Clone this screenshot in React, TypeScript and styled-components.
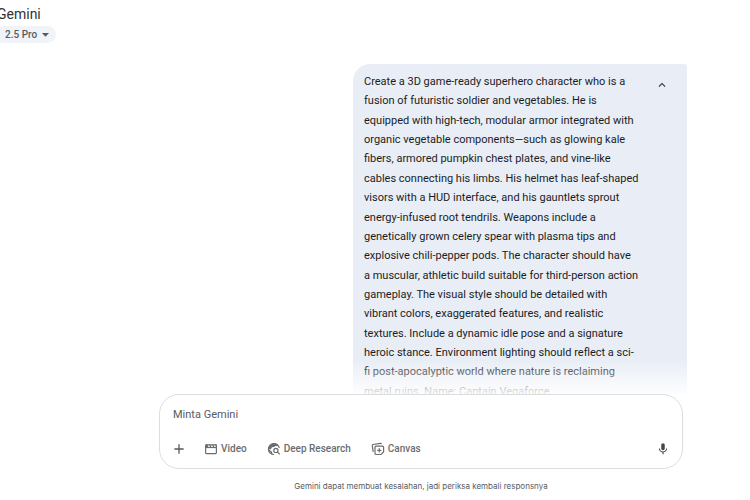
import React from "react";
import styled, { createGlobalStyle } from "styled-components";
import { MdAdd, MdArrowDropDown, MdKeyboardArrowUp, MdMic } from "react-icons/md";

const GlobalStyle = createGlobalStyle`
  *, *::before, *::after { box-sizing: border-box; }
  body {
    margin: 0;
    background: #fff;
    color: #1b1c1d;
    font-family: Roboto, Inter, sans-serif;
  }
  button, textarea { font: inherit; }
`;

const Page = styled.div`
  display: flex;
  flex-direction: column;
  height: 100vh;
  overflow: hidden;
`;

const Header = styled.header`
  display: flex;
  flex-direction: column;
  align-items: flex-start;
  gap: 3px;
  padding-top: 5px;
  margin-left: -5px;
`;

const Brand = styled.a`
  padding-left: 2px;
  font-size: 14px;
  line-height: 18px;
  color: #303134;
  text-decoration: none;
`;

const ModelButton = styled.button`
  display: flex;
  align-items: center;
  height: 17px;
  padding: 0 2px 0 10px;
  border: 0;
  border-radius: 9px;
  background: #f0f4f9;
  color: #575b5f;
  font-size: 10px;
  font-weight: 500;
`;

const Conversation = styled.main`
  position: relative;
  flex: 1;
  min-height: 0;
  overflow: hidden;
  padding: 21px 63px 0 92px;

  &::after {
    content: "";
    position: absolute;
    inset: auto 0 0;
    height: 34px;
    background: linear-gradient(rgba(255, 255, 255, 0), rgba(255, 255, 255, 0.9));
  }
`;

const Bubble = styled.article`
  display: flex;
  align-items: flex-start;
  justify-content: space-between;
  max-width: 334px;
  margin-left: auto;
  padding: 8px 17px 12px 11px;
  border-radius: 17px 3px 17px 17px;
  background: #e9eef6;
`;

const Prompt = styled.p`
  margin: 0;
  font-size: 11px;
  line-height: 1.76;
  white-space: pre;
`;

const IconButton = styled.button<{ $tone?: string }>`
  display: grid;
  place-items: center;
  flex: none;
  width: 16px;
  height: 16px;
  padding: 0;
  border: 0;
  background: none;
  color: ${(p) => p.$tone ?? "#575b5f"};
`;

const CollapseButton = styled(IconButton)`
  margin-top: 5px;
`;

const Footer = styled.footer`
  padding: 0 67px 8px 159px;
`;

const Composer = styled.form`
  display: flex;
  flex-direction: column;
  justify-content: space-between;
  height: 75px;
  padding: 11px;
  border: 1px solid #dcdddf;
  border-radius: 20px;
  background: #fff;
`;

const PromptInput = styled.textarea`
  width: 100%;
  height: 18px;
  padding: 0 2px;
  border: 0;
  outline: 0;
  resize: none;
  overflow: hidden;
  font-size: 11px;
  line-height: 18px;
  color: #1b1c1d;

  &::placeholder { color: #575b5f; opacity: 1; }
`;

const Toolbar = styled.div`
  display: flex;
  align-items: center;
`;

const Tools = styled.div`
  display: flex;
  align-items: center;
  gap: 20px;
  margin: 0 auto 0 17px;
`;

const ToolButton = styled.button`
  display: flex;
  align-items: center;
  gap: 3px;
  padding: 0;
  border: 0;
  background: none;
  color: #6a6d70;
  font-size: 10px;
  font-weight: 500;
  line-height: 16px;
`;

const Disclaimer = styled.p`
  margin: 11px 0 0;
  font-family: Inter, Roboto, sans-serif;
  font-size: 8px;
  line-height: 12px;
  text-align: center;
  color: #575b5f;
`;

const VideoIcon = () => (
  <svg width="14" height="14" viewBox="0 0 14 14" fill="none" stroke="currentColor" strokeWidth="1.2" aria-hidden="true">
    <rect x="1.6" y="2.8" width="10.8" height="8.8" rx="0.8" />
    <path d="M1.6 5.5h10.8" />
    <path d="M2 2.2h1.3l1.2 3H2ZM5 2.2h1.2l1.2 3H6.2ZM8 2.2h1.2l1.2 3H9.2ZM11 2.2h1.4v3Z" fill="currentColor" stroke="none" />
  </svg>
);

const ResearchIcon = () => (
  <svg width="14" height="14" viewBox="0 0 14 14" fill="none" stroke="currentColor" strokeWidth="1.2" aria-hidden="true">
    <path d="M12.3 6A5.5 5.5 0 1 0 7 12.5" />
    <path d="M1.9 5 4.4 1.9 9 1.6l2.3 2.7-3-.3-1.2 1-2.2.3-1 2-2.5.3Z" fill="currentColor" stroke="none" />
    <path d="m1.7 8.2 2.6 1.6.5 2.2" />
    <circle cx="8.9" cy="8.4" r="2.1" />
    <path d="m10.4 9.9 2.4 2.5" />
  </svg>
);

const CanvasIcon = () => (
  <svg width="14" height="14" viewBox="0 0 14 14" fill="none" stroke="currentColor" strokeWidth="1.2" aria-hidden="true">
    <path d="M5 4.2h6.6a1 1 0 0 1 1 1v4.7L10 12.5H5a1 1 0 0 1-1-1V5.2a1 1 0 0 1 1-1Z" />
    <path d="M8.3 6.2v4.2M6.2 8.3h4.2" />
    <path d="m2.2 9.8-.9-6.2c-.1-.6.3-1 .8-1.1l7.3-1.1c.6-.1.9.2 1 .8" />
  </svg>
);

const promptText = `Create a 3D game-ready superhero character who is a
fusion of futuristic soldier and vegetables. He is
equipped with high-tech, modular armor integrated with
organic vegetable components—such as glowing kale
fibers, armored pumpkin chest plates, and vine-like
cables connecting his limbs. His helmet has leaf-shaped
visors with a HUD interface, and his gauntlets sprout
energy-infused root tendrils. Weapons include a
genetically grown celery spear with plasma tips and
explosive chili-pepper pods. The character should have
a muscular, athletic build suitable for third-person action
gameplay. The visual style should be detailed with
vibrant colors, exaggerated features, and realistic
textures. Include a dynamic idle pose and a signature
heroic stance. Environment lighting should reflect a sci-
fi post-apocalyptic world where nature is reclaiming
metal ruins. Name: Captain Vegaforce.`;

const tools = [
  { label: "Video", Icon: VideoIcon },
  { label: "Deep Research", Icon: ResearchIcon },
  { label: "Canvas", Icon: CanvasIcon },
];

export default function App() {
  return (
    <>
      <GlobalStyle />
      <Page>
        <Header>
          <Brand href="#">Gemini</Brand>
          <ModelButton type="button">
            2.5 Pro
            <MdArrowDropDown size={17} />
          </ModelButton>
        </Header>
        <Conversation>
          <Bubble>
            <Prompt>{promptText}</Prompt>
            <CollapseButton type="button" aria-label="Collapse" $tone="#303134">
              <MdKeyboardArrowUp size={14} />
            </CollapseButton>
          </Bubble>
        </Conversation>
        <Footer>
          <Composer>
            <PromptInput aria-label="Minta Gemini" placeholder="Minta Gemini" rows={1} />
            <Toolbar>
              <IconButton type="button" aria-label="Add">
                <MdAdd size={16} />
              </IconButton>
              <Tools>
                {tools.map(({ label, Icon }) => (
                  <ToolButton type="button" key={label}>
                    <Icon />
                    {label}
                  </ToolButton>
                ))}
              </Tools>
              <IconButton type="button" aria-label="Microphone" $tone="#444746">
                <MdMic size={14} />
              </IconButton>
            </Toolbar>
          </Composer>
          <Disclaimer>Gemini dapat membuat kesalahan, jadi periksa kembali responsnya</Disclaimer>
        </Footer>
      </Page>
    </>
  );
}
